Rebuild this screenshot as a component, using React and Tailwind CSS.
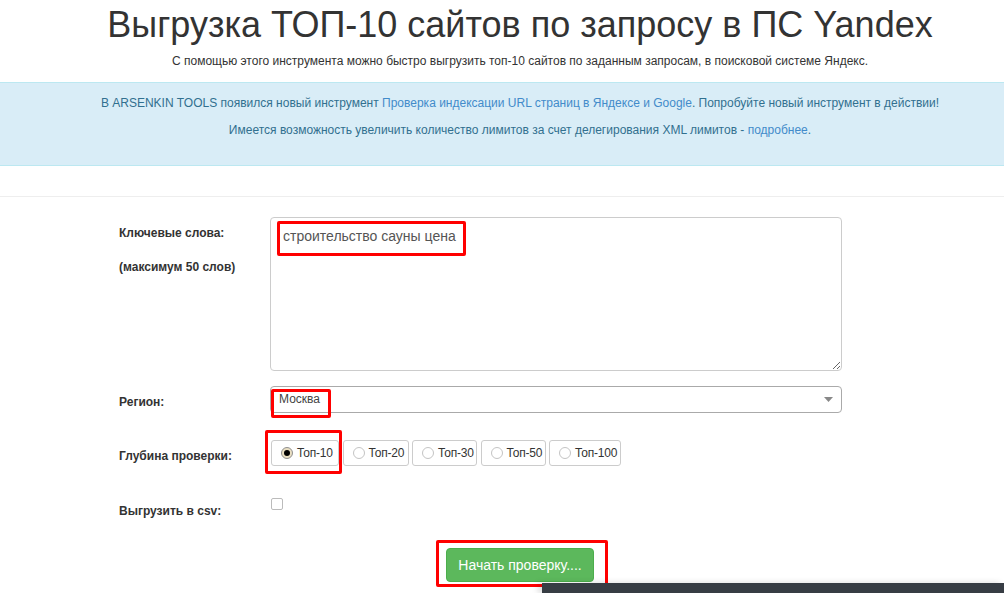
import { useState } from 'react'

const depths = [
  { label: 'Топ-10', w: 'w-[68px]' },
  { label: 'Топ-20', w: 'w-[66px]' },
  { label: 'Топ-30', w: 'w-[65px]' },
  { label: 'Топ-50', w: 'w-[65px]' },
  { label: 'Топ-100', w: 'w-[72px]' },
]

function Radio({ checked }) {
  return checked ? (
    <span className="w-[12px] h-[12px] rounded-full border border-[#8f8f8f] bg-[#eadfc2] flex items-center justify-center shrink-0">
      <span className="w-[6px] h-[6px] rounded-full bg-black" />
    </span>
  ) : (
    <span className="w-[12px] h-[12px] rounded-full border border-[#c4c4c4] bg-white shrink-0" />
  )
}

function Mark({ className }) {
  return <div className={`absolute border-[3px] border-[#ff0000] rounded-[2px] pointer-events-none ${className}`} />
}

export default function App() {
  const [depth, setDepth] = useState('Топ-10')

  return (
    <div className="relative w-full h-[593px] overflow-hidden bg-white text-[#333] font-['Liberation_Sans',Arial,sans-serif]">
      <div className="w-[1040px]">
        {/* Header */}
        <h1 className="pt-[5px] text-center text-[36px] leading-[40px] font-normal text-[#333]">
          Выгрузка ТОП-10 сайтов по запросу в ПС Yandex
        </h1>
        <p className="mt-[8px] text-center text-[12px] leading-[17px]">
          С помощью этого инструмента можно быстро выгрузить топ-10 сайтов по заданным запросам, в поисковой системе Яндекс.
        </p>

        {/* Notice */}
        <div className="mt-[12px] h-[84px] border-y border-[#bce8f1] bg-[#d9edf7] pt-[12px] text-center text-[12px] leading-[17px] text-[#31708f]">
          <p>
            В ARSENKIN TOOLS появился новый инструмент{' '}
            <a className="text-[#428bca]">Проверка индексации URL страниц в Яндексе и Google</a>. Попробуйте новый инструмент в действии!
          </p>
          <p className="mt-[10px]">
            Имеется возможность увеличить количество лимитов за счет делегирования XML лимитов -{' '}
            <a className="text-[#428bca]">подробнее</a>.
          </p>
        </div>

        <div className="mt-[30px] border-t border-[#eee]" />

        {/* Form */}
        <div className="pt-[20px] pl-[119px] text-[12px] leading-[17px]">
          <div className="flex">
            <div className="w-[151px] pt-[8px] font-bold">
              <p>Ключевые слова:</p>
              <p className="mt-[17px]">(максимум 50 слов)</p>
            </div>
            <div className="relative">
              <textarea
                defaultValue="строительство сауны цена"
                className="block w-[572px] h-[154px] rounded-[4px] border border-[#ccc] px-[12px] pt-[8px] text-[14px] leading-[20px] text-[#555] outline-none resize"
              />
              <Mark className="left-[7px] top-[4px] w-[189px] h-[35px]" />
            </div>
          </div>

          <div className="flex mt-[15px]">
            <div className="w-[151px] pt-[8px] font-bold">Регион:</div>
            <div className="relative">
              <div className="w-[572px] h-[27px] rounded-[4px] border border-[#aaa] flex items-center justify-between pl-[8px] pr-[8px] text-[12px] text-[#444]">
                <span>Москва</span>
                <svg width="9" height="5" viewBox="0 0 9 5"><path d="M0 0h9L4.5 5z" fill="#888" /></svg>
              </div>
              <Mark className="left-[1px] top-[3px] w-[60px] h-[29px]" />
            </div>
          </div>

          <div className="flex mt-[27px]">
            <div className="w-[152px] pt-[8px] font-bold">Глубина проверки:</div>
            <div className="relative flex gap-[3.5px]">
              {depths.map(d => (
                <label
                  key={d.label}
                  onClick={() => setDepth(d.label)}
                  className={`h-[26px] ${d.w} flex items-center gap-[4px] pl-[9px] border border-[#ccc] rounded-[3px] text-[12px] text-[#333] cursor-pointer whitespace-nowrap`}
                >
                  <Radio checked={depth === d.label} />
                  <span className="tracking-[-0.2px]">{d.label}</span>
                </label>
              ))}
              <Mark className="left-[-6px] top-[-10px] w-[77px] h-[44px]" />
            </div>
          </div>

          <div className="flex mt-[32px]">
            <div className="w-[152px] pt-[5px] font-bold">Выгрузить в csv:</div>
            <span className="w-[12px] h-[12px] rounded-[2px] border border-[#bbb] bg-white" />
          </div>
        </div>

        <div className="flex justify-center mt-[28px]">
          <div className="relative">
            <button className="h-[34px] w-[148px] rounded-[4px] border border-[#4cae4c] bg-[#5cb85c] text-white text-[14px]">
              Начать проверку....
            </button>
            <Mark className="left-[-10px] top-[-8px] w-[172px] h-[47px]" />
          </div>
        </div>
      </div>

      {/* bottom toolbar peeking in */}
      <div className="absolute left-[542px] right-0 bottom-0 h-[10px] bg-[#373d44] shadow-[-4px_0_6px_rgba(0,0,0,0.15)]" />
    </div>
  )
}
